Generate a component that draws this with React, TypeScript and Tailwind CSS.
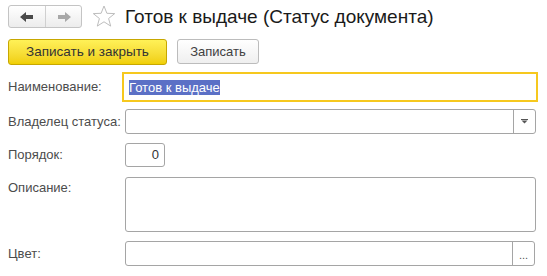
import React from "react";

function NavButtons() {
  return (
    <div className="flex h-[23px] w-[74px] rounded-[3px] border border-[#c4c4c4] bg-gradient-to-b from-white to-[#ececec]">
      <div className="flex w-[37px] items-center justify-center border-r border-[#d0d0d0]">
        <svg width="14" height="10" viewBox="0 0 14 10">
          <path d="M0 5 L6 0 V3 H13 V7 H6 V10 Z" fill="#4a4a4a" />
        </svg>
      </div>
      <div className="flex flex-1 items-center justify-center">
        <svg width="14" height="10" viewBox="0 0 14 10">
          <path d="M14 5 L8 0 V3 H1 V7 H8 V10 Z" fill="#a8a8a8" />
        </svg>
      </div>
    </div>
  );
}

function Star() {
  return (
    <svg width="24" height="23" viewBox="0 0 24 23" className="ml-[10px]">
      <path
        d="M12 1 L14.9 8.3 L22.7 8.6 L16.6 13.5 L18.7 21.1 L12 16.8 L5.3 21.1 L7.4 13.5 L1.3 8.6 L9.1 8.3 Z"
        fill="none"
        stroke="#bdbdbd"
        strokeWidth="1"
        strokeLinejoin="round"
      />
    </svg>
  );
}

function Label({ children, top }: { children: React.ReactNode; top?: boolean }) {
  return (
    <div
      className={
        "w-[117px] shrink-0 text-[13px] text-[#4c4c4c] " +
        (top ? "pt-[1px]" : "self-center")
      }
    >
      {children}
    </div>
  );
}

export default function App() {
  return (
    <div
      className="h-[276px] w-[547px] bg-white pl-[8px] pt-[5px]"
      style={{ fontFamily: '"Liberation Sans", Arial, sans-serif' }}
    >
      {/* header */}
      <div className="flex h-[23px] items-center">
        <NavButtons />
        <Star />
        <div className="ml-[9px] text-[19px] leading-none text-[#1a1a1a]">
          Готов к выдаче (Статус документа)
        </div>
      </div>

      {/* command bar */}
      <div className="mt-[11px] flex items-start gap-[10px]">
        <button className="h-[26px] w-[159px] rounded-[3px] border border-[#c7a700] bg-gradient-to-b from-[#fff157] to-[#f0cf00] text-[13.5px] text-[#333]">
          Записать и закрыть
        </button>
        <button className="h-[25px] w-[82px] rounded-[3px] border border-[#bcbcbc] bg-gradient-to-b from-white to-[#efefef] text-[13px] text-[#404040]">
          Записать
        </button>
      </div>

      {/* Наименование */}
      <div className="mt-[7px] flex h-[30px]">
        <Label>Наименование:</Label>
        <div className="-ml-[3px] flex h-[30px] w-[416px] items-center border-2 border-[#f6c81e] pl-[5px]">
          <span className="bg-[#5b70c6] px-0 text-[13px] leading-[15px] text-white">
            Готов к выдаче
          </span>
        </div>
      </div>

      {/* Владелец статуса */}
      <div className="mt-[7px] flex h-[25px]">
        <Label>Владелец статуса:</Label>
        <div className="flex h-[25px] w-[411px] rounded-[3px] border border-[#a5a5a5]">
          <div className="flex-1" />
          <div className="flex w-[22px] items-center justify-center border-l border-[#a5a5a5]">
            <svg width="7" height="5" viewBox="0 0 7 5">
              <rect x="0" y="0" width="7" height="1" fill="#555" />
              <path d="M0.5 1.5 H6.5 L3.5 4.5 Z" fill="#555" />
            </svg>
          </div>
        </div>
      </div>

      {/* Порядок */}
      <div className="mt-[9px] flex h-[24px]">
        <Label>Порядок:</Label>
        <div className="flex h-[24px] w-[40px] items-center justify-end rounded-[3px] border border-[#a5a5a5] pr-[5px] text-[13px] text-[#333]">
          0
        </div>
      </div>

      {/* Описание */}
      <div className="mt-[10px] flex h-[55px]">
        <Label top>Описание:</Label>
        <div className="h-[55px] w-[411px] rounded-[3px] border border-[#a5a5a5]" />
      </div>

      {/* Цвет */}
      <div className="mt-[9px] flex h-[25px]">
        <Label>Цвет:</Label>
        <div className="flex h-[25px] w-[410px] rounded-[3px] border border-[#a5a5a5]">
          <div className="flex-1" />
          <div className="flex w-[22px] items-center justify-center border-l border-[#a5a5a5] pt-[3px] text-[11px] text-[#555]">
            ...
          </div>
        </div>
      </div>
    </div>
  );
}
